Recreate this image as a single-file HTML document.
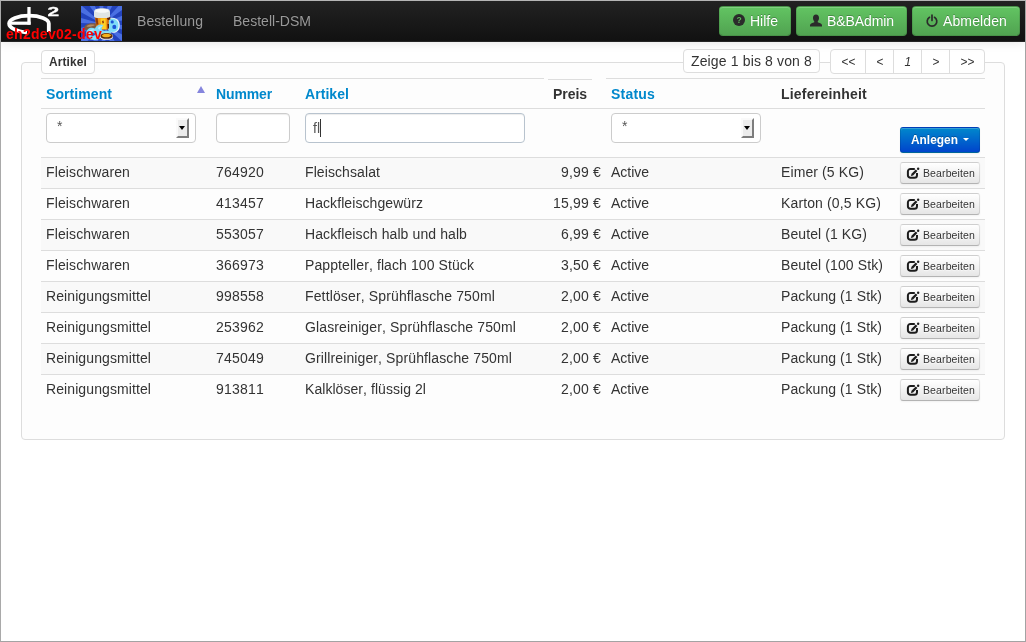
<!DOCTYPE html>
<html lang="de"><head>
<meta charset="utf-8">
<title>Artikel</title>
<style>
*{box-sizing:content-box;}
html,body{margin:0;padding:0;}
html{background:#fff;}
body{width:1024px;height:640px;border:1px solid #a3a3a3;border-top-color:#b5b5b5;border-left-color:#a9a9a9;overflow:hidden;position:relative;
 font-family:"Liberation Sans",Arial,sans-serif;font-size:14px;line-height:20px;color:#333;background:#fff;font-kerning:none;will-change:transform;}
a{text-decoration:none;color:#0088cc;}
/* navbar */
.navbar{position:absolute;left:0;top:0;width:1024px;height:40px;border-bottom:1px solid #252525;
 background:linear-gradient(to bottom,#222222,#111111);box-shadow:0 1px 10px rgba(0,0,0,.1);z-index:5;}
.brand{position:absolute;left:0;top:0;width:130px;height:40px;}
.devname{position:absolute;left:5px;top:23px;font-weight:bold;font-size:14px;line-height:20px;color:#ff0000;white-space:nowrap;}
.nav a{position:absolute;top:0;height:20px;padding:10px 15px;color:#999;text-shadow:0 -1px 0 rgba(0,0,0,.25);white-space:nowrap;}
.btn{display:inline-block;box-sizing:border-box;font-size:14px;line-height:20px;padding:4px 12px;text-align:center;border:1px solid #ccc;border-radius:4px;
 color:#333;text-shadow:0 1px 1px rgba(255,255,255,.75);background:linear-gradient(to bottom,#ffffff,#e6e6e6);
 border-color:rgba(0,0,0,.1) rgba(0,0,0,.1) rgba(0,0,0,.25);border-bottom-color:#b3b3b3;
 box-shadow:inset 0 1px 0 rgba(255,255,255,.2),0 1px 2px rgba(0,0,0,.05);white-space:nowrap;vertical-align:middle;}
.btn-success{color:#fff;text-shadow:0 -1px 0 rgba(0,0,0,.25);background:linear-gradient(to bottom,#62c462,#51a351);
 border-color:rgba(0,0,0,.1) rgba(0,0,0,.1) rgba(0,0,0,.25);}
.btn-primary{color:#fff;text-shadow:0 -1px 0 rgba(0,0,0,.25);background:linear-gradient(to bottom,#0088cc,#0044cc);
 border-color:rgba(0,0,0,.1) rgba(0,0,0,.1) rgba(0,0,0,.25);}
.navbtn{position:absolute;top:5px;height:30px;padding:4px 0;text-align:left;}
.navbtn svg{position:absolute;top:7px;}
.navbtn b{position:absolute;top:4px;font-weight:normal;}
.btn-mini{display:block;position:relative;padding:0;font-size:10.5px;border-radius:3px;height:22px;width:80px;text-align:left;}
.btn-mini svg{position:absolute;left:5px;top:3px;}
.btn-mini b{position:absolute;left:22px;top:0;font-weight:normal;line-height:21px;}
.btn-small{display:block;position:absolute;padding:0;font-size:11.9px;border-radius:3px;height:26px;width:80px;font-weight:bold;text-align:left;}
/* fieldset */
.fs{position:absolute;left:20px;top:61px;width:982px;height:376px;border:1px solid #ddd;border-radius:4px;background:#fdfdfd;}
.legend{position:absolute;left:40px;top:49px;width:52px;height:22px;border:1px solid #ddd;border-radius:4px;background:#fff;
 font-size:11.9px;font-weight:bold;line-height:22px;text-align:center;z-index:2;}
.pinfo{position:absolute;left:682px;top:48px;width:135px;height:22px;border:1px solid #ddd;border-radius:4px;background:#fff;
 font-size:14px;line-height:23px;text-align:center;z-index:2;}
.pager{position:absolute;left:829px;top:48px;height:23px;border:1px solid #ddd;border-radius:4px;background:#fff;z-index:2;display:flex;font-size:11.9px;}
.pager span{display:block;height:23px;line-height:24px;text-align:center;text-indent:1px;border-left:1px solid #ddd;}
.pager span:first-child{border-left:0;}
/* table */
table{position:absolute;left:40px;top:77px;width:944px;border-collapse:collapse;border-spacing:0;table-layout:fixed;z-index:1;}
th,td{padding:4px 5px;line-height:20px;text-align:left;vertical-align:top;border-top:1px solid #ddd;white-space:nowrap;overflow:visible;position:relative;}
th{font-weight:bold;vertical-align:bottom;height:21px;border-top:1px solid transparent;}
td{height:22px;}
th a{color:#0088cc;}
tbody tr:nth-child(even) td{background:#f9f9f9;}
tbody tr:nth-child(odd) td{background:#fdfdfd;}
td.r,th.r{text-align:right;}
tr.filter td{height:40px;background:transparent !important;}
.hl{position:absolute;height:1px;background:#ddd;z-index:2;}
.inp{display:block;box-sizing:border-box;height:30px;border:1px solid #ccc;border-radius:4px;background:#fff;
 box-shadow:inset 0 1px 1px rgba(0,0,0,.075);font-size:14px;line-height:20px;padding:4px 6px;color:#555;position:relative;}
.sel{padding-left:10px;padding-top:2px;box-shadow:none;}
.foc{border-color:#b8c3ce;padding-left:7px;}
.foc u{position:absolute;left:14px;top:5px;width:1px;height:18px;background:#333;}
.sel i{position:absolute;right:6px;top:4px;width:9px;height:16px;background:#ececec;border:2px solid;border-color:#fafafa #7d7d7d #7d7d7d #fafafa;}
.sel i:after{content:"";position:absolute;left:0.900px;top:6px;border:3.700px solid transparent;border-top:4px solid #000;border-bottom:0;}
.caret{display:inline-block;width:0;height:0;vertical-align:top;border-top:3.500px solid #fff;border-right:3.300px solid transparent;border-left:3.300px solid transparent;margin-top:8px;margin-left:5px;}
.sort{position:absolute;left:156px;top:7px;width:0;height:0;border:4px solid transparent;border-top:0;border-bottom:7px solid #8585dd;}
</style>
</head>
<body>
<div class="navbar">
  <div class="brand">
    <svg width="130" height="41" viewBox="0 0 130 41" style="position:absolute;left:0;top:0">
      <g fill="none" stroke="#fff">
        <path stroke-width="3.300" d="M28 6 V23.600"></path>
        <path stroke-width="3.200" d="M9 22.200 H29.600"></path>
        <path stroke-width="3.800" d="M47.800 31 V22.500 A19.800 7.800 0 0 0 8.100 22.500 C8.100 26.500 15 30.500 26 31.500"></path>
      </g>
      <text x="0" y="15" font-family="Liberation Sans, sans-serif" font-weight="bold" font-size="13.500" fill="#fff" stroke="#fff" stroke-width="0.300" transform="translate(46.600 -0.400) scale(1.550 1)">2</text>
    </svg>
    <svg width="41" height="35" viewBox="0 0 41 35" style="position:absolute;left:80px;top:5px">
      <rect width="41" height="35" fill="#2343bd"></rect>
      <path fill="#4a6fe2" d="M21.5 18.0 L81.4 21.0 L79.3 34.3Z M21.5 18.0 L74.2 46.7 L66.5 57.7Z M21.5 18.0 L56.5 66.7 L44.8 73.3Z M21.5 18.0 L31.9 77.1 L18.5 77.9Z M21.5 18.0 L5.2 75.8 L-7.2 70.7Z M21.5 18.0 L-18.2 63.0 L-27.2 53.0Z M21.5 18.0 L-33.8 41.3 L-37.6 28.4Z M21.5 18.0 L-38.4 15.0 L-36.3 1.7Z M21.5 18.0 L-31.2 -10.7 L-23.5 -21.7Z M21.5 18.0 L-13.5 -30.7 L-1.8 -37.3Z M21.5 18.0 L11.1 -41.1 L24.5 -41.9Z M21.5 18.0 L37.8 -39.8 L50.2 -34.7Z M21.5 18.0 L61.2 -27.0 L70.2 -17.0Z M21.5 18.0 L76.8 -5.3 L80.6 7.6Z"></path>
      <path fill="#7d5a40" d="M3 22 C3.500 18.500 8 17 12 17.200 C16 17.300 18.500 19 18 21.500 C17.500 24 13 25 9 24.800 C5.500 24.600 3 24 3 22Z"></path>
      <path fill="#b38c66" d="M5.500 20.500 C7 18.500 11 18.200 14 19 C12 20.300 8 21.300 5.500 20.500Z"></path>
      <path fill="#5b3a26" d="M9 22.500 C11 22 14 22 16 23.500 C13 24.300 11 24.200 9 22.500Z"></path>
      <path fill="#e9f6fb" d="M27.500 13 C30 10.800 36 11.500 38 15.500 C39.800 19.500 38.500 24.500 35 26.300 C32 27.500 28.500 26.500 27.500 24Z"></path>
      <path fill="#7fdcf8" d="M27 13.500 C29.500 11.800 35 12.500 36.800 16 C38.300 19.500 37.300 24 34.300 25.500 C31.500 26.500 28 25.500 27 23.500Z"></path>
      <ellipse cx="31.200" cy="15.900" rx="1.600" ry="1.700" fill="#1d55d6"></ellipse>
      <ellipse cx="33.300" cy="20.900" rx="2" ry="2.200" fill="#1d55d6"></ellipse>
      <path fill="#d4700f" d="M14 11 H28.300 L27.300 23.500 H15.300Z"></path>
      <path fill="#f29a16" d="M17 11.500 H26 L26 23.500 H18Z"></path>
      <path fill="#ffd024" d="M19.500 12.500 H24.500 L25 23 H20.500Z"></path>
      <path fill="#8c3c0c" d="M14.500 12 L16.500 12.300 L17.300 18 L15.500 19Z M21 15 L22.500 14.500 L23 17 L21.500 17.500Z"></path>
      <path fill="#5a1f08" d="M26 10.800 L29.300 10.800 L29.300 13.600 L27 14 L26 12.500Z M26.500 18 L28 18 L28 22.500 L26.800 22.500Z"></path>
      <path fill="#7fdcf8" d="M5.200 27 C5.500 22.500 10 20.500 14 22.500 C15.500 19 20 17.500 22.500 19.500 C20.500 21 20 23 21.500 24.500 C24 25.500 28 24 30 25 C31 27 29 28.500 26 28 C23 28.500 20.500 30 19.500 32 C17 34.500 10 34.800 7 32 C5.500 30.500 5 29 5.200 27Z"></path>
      <path fill="#c9f2fd" d="M7 26.500 C8 23.800 11 23 13.500 24 C11 24.500 9 26 8.500 28.500Z M17 22 C18 20.500 20 19.800 21.500 20.300 C19.500 21 18.500 22.500 18.500 24Z"></path>
      <path fill="#2750c8" d="M9.500 28.500 C10.500 26.500 13 26.300 14.300 28 C13.500 30.300 10.800 30.600 9.500 28.500Z"></path>
      <path fill="#f4f4ee" d="M19 30.500 C19 28 22 26.800 25.500 26.800 C29 26.800 32 28 32 30.500 C32 33 29 33.800 25.500 33.800 C22 33.800 19 33 19 30.500Z"></path>
      <path fill="#5a2a0a" d="M19.500 30 C19.500 28 22 27 25.500 27 C29 27 31.600 28 31.600 30 C31.600 32 29 32.800 25.500 32.800 C22 32.800 19.500 32 19.500 30Z"></path>
      <path fill="#f2b21e" d="M20.800 29.800 C21.500 28.300 23.500 27.800 25.500 27.800 C27.500 27.800 29.500 28.300 30.300 29.500 C29 30.800 27 31.300 25.500 31.300 C23.500 31.300 21.500 30.800 20.800 29.800Z"></path>
      <path fill="#dfe5e5" d="M13 6 C13 3.300 16 2.300 21 2.300 C26 2.300 29 3.300 29 6 V10.200 C29 11.700 26 12 21 12 C16 12 13 11.700 13 10.200Z"></path>
      <path fill="#f7f9f9" d="M14 5.600 C14 3.600 17 3 21 3 C25 3 28 3.600 28 5.600 C26 6.600 24 6.800 21 6.800 C18 6.800 16 6.600 14 5.600Z"></path>
    </svg>
    <div class="devname" style="letter-spacing: 0.283px;">eh2dev02-dev</div>
  </div>
  <div class="nav">
    <a style="left: 121px; letter-spacing: 0.061px;">Bestellung</a>
    <a style="left: 217px; letter-spacing: 0.018px;">Bestell-DSM</a>
  </div>
  <span class="btn btn-success navbtn" style="left:718px;width:72px">
    <svg width="14" height="14" viewBox="0 0 14 14" style="left:12px;top:6px"><circle cx="7" cy="7" r="6" fill="#2b2b2b"></circle><text x="7" y="10" text-anchor="middle" font-family="Liberation Sans, sans-serif" font-weight="bold" font-size="8.5" fill="#5cb85c">?</text></svg>
    <b style="left: 30px; letter-spacing: -0.003px;">Hilfe</b></span>
  <span class="btn btn-success navbtn" style="left:795px;width:111px">
    <svg width="14" height="14" viewBox="0 0 14 14" style="left:12px"><path fill="#2b2b2b" d="M7 0.6c1.9 0 3 1.4 3 3.3 0 1.5-.6 2.8-1.3 3.5v.9c1.600.5 4 1.500 4.300 2.700v1.500H1v-1.500c.3-1.200 2.700-2.200 4.300-2.700v-.9C4.600 6.700 4 5.400 4 3.900 4 2 5.100.6 7 .6z"></path></svg>
    <b style="left: 30px; letter-spacing: -0.088px;">B&amp;BAdmin</b></span>
  <span class="btn btn-success navbtn" style="left:911px;width:108px">
    <svg width="14" height="14" viewBox="0 0 14 14" style="left:12px;top:6.500px"><path fill="none" stroke="#2b2b2b" stroke-width="1.700" stroke-linecap="round" d="M4.500 3.300A4.800 4.800 0 1 0 9.500 3.300M7 1V6.500"></path></svg>
    <b style="left: 30px; letter-spacing: 0.119px;">Abmelden</b></span>
</div>
<div class="fs"></div>
<div class="legend" style="letter-spacing: 0.141px;">Artikel</div>
<div class="pinfo" style="letter-spacing: 0.142px;">Zeige 1 bis 8 von 8</div>
<div class="pager"><span style="width: 34px; letter-spacing: 0.055px;">&lt;&lt;</span><span style="width: 27px; letter-spacing: 0.047px;">&lt;</span><span style="width:27px"><i style="letter-spacing: 0.375px;">1</i></span><span style="width: 27px; letter-spacing: 0.047px;">&gt;</span><span style="width: 34px; letter-spacing: 0.055px;">&gt;&gt;</span></div>
<div class="hl" style="left:40px;top:77px;width:503px"></div>
<div class="hl" style="left:547px;top:78px;width:44px"></div>
<div class="hl" style="left:605px;top:77px;width:379px"></div>
<table>
<colgroup><col style="width:170px"><col style="width:89px"><col style="width:248px"><col style="width:58px"><col style="width:170px"><col style="width:119px"><col style="width:90px"></colgroup>
<thead>
<tr><th><a style="letter-spacing: 0.073px;">Sortiment</a><i class="sort"></i></th><th><a style="letter-spacing: -0.133px;">Nummer</a></th><th><a style="letter-spacing: 0.06px;">Artikel</a></th><th style="letter-spacing: -0.05px;">Preis</th><th><a style="letter-spacing: 0.201px;">Status</a></th><th style="letter-spacing: 0.212px;">Liefereinheit</th><th></th></tr>
</thead>
<tbody>
<tr class="filter"><td><div class="inp sel" style="width:150px"><span style="letter-spacing: -0.453px;">*</span><i></i></div></td><td><div class="inp" style="width:74px"></div></td><td><div class="inp foc" style="width:220px"><span style="letter-spacing: 0px;">fl</span><u></u></div></td><td></td><td><div class="inp sel" style="width:150px"><span style="letter-spacing: -0.453px;">*</span><i></i></div></td><td></td><td><span class="btn btn-primary btn-small" style="left:5px;top:18px"><span style="position:absolute;left:10px;top:2px"><span style="letter-spacing: 0.011px;">Anlegen</span><span class="caret"></span></span></span></td></tr>
<tr><td style="letter-spacing: 0.126px;">Fleischwaren</td><td style="letter-spacing: 0.214px;">764920</td><td style="letter-spacing: 0.09px;">Fleischsalat</td><td class="r" style="letter-spacing: 0.177px;">9,99 €</td><td style="letter-spacing: -0.021px;">Active</td><td style="letter-spacing: 0.109px;">Eimer (5 KG)</td><td><span class="btn btn-mini"><svg width="14" height="14" viewBox="0 0 14 14"><path fill="none" stroke="#1c1c1c" stroke-width="2" stroke-linecap="butt" d="M8.800 2.900H4.500A2.600 2.600 0 0 0 1.900 5.500V9.200A2.600 2.600 0 0 0 4.500 11.800H8.400A2.600 2.600 0 0 0 11 9.200V7"></path><path fill="#1c1c1c" d="M4.900 10 5.500 7.800 9.800 3.500 11.400 5.100 7.100 9.400z"></path><circle cx="12.150" cy="2.750" r="1.200" fill="#1c1c1c"></circle></svg><b style="letter-spacing: 0.12px;">Bearbeiten</b></span></td></tr>
<tr><td style="letter-spacing: 0.126px;">Fleischwaren</td><td style="letter-spacing: 0.214px;">413457</td><td style="letter-spacing: 0.075px;">Hackfleischgewürz</td><td class="r" style="letter-spacing: 0.183px;">15,99 €</td><td style="letter-spacing: -0.021px;">Active</td><td style="letter-spacing: 0.13px;">Karton (0,5 KG)</td><td><span class="btn btn-mini"><svg width="14" height="14" viewBox="0 0 14 14"><path fill="none" stroke="#1c1c1c" stroke-width="2" stroke-linecap="butt" d="M8.800 2.900H4.500A2.600 2.600 0 0 0 1.900 5.500V9.200A2.600 2.600 0 0 0 4.500 11.800H8.400A2.600 2.600 0 0 0 11 9.200V7"></path><path fill="#1c1c1c" d="M4.900 10 5.500 7.800 9.800 3.500 11.400 5.100 7.100 9.400z"></path><circle cx="12.150" cy="2.750" r="1.200" fill="#1c1c1c"></circle></svg><b style="letter-spacing: 0.12px;">Bearbeiten</b></span></td></tr>
<tr><td style="letter-spacing: 0.126px;">Fleischwaren</td><td style="letter-spacing: 0.214px;">553057</td><td style="letter-spacing: 0.098px;">Hackfleisch halb und halb</td><td class="r" style="letter-spacing: 0.177px;">6,99 €</td><td style="letter-spacing: -0.021px;">Active</td><td style="letter-spacing: 0.09px;">Beutel (1 KG)</td><td><span class="btn btn-mini"><svg width="14" height="14" viewBox="0 0 14 14"><path fill="none" stroke="#1c1c1c" stroke-width="2" stroke-linecap="butt" d="M8.800 2.900H4.500A2.600 2.600 0 0 0 1.900 5.500V9.200A2.600 2.600 0 0 0 4.500 11.800H8.400A2.600 2.600 0 0 0 11 9.200V7"></path><path fill="#1c1c1c" d="M4.900 10 5.500 7.800 9.800 3.500 11.400 5.100 7.100 9.400z"></path><circle cx="12.150" cy="2.750" r="1.200" fill="#1c1c1c"></circle></svg><b style="letter-spacing: 0.12px;">Bearbeiten</b></span></td></tr>
<tr><td style="letter-spacing: 0.126px;">Fleischwaren</td><td style="letter-spacing: 0.214px;">366973</td><td style="letter-spacing: 0.091px;">Pappteller, flach 100 Stück</td><td class="r" style="letter-spacing: 0.177px;">3,50 €</td><td style="letter-spacing: -0.021px;">Active</td><td style="letter-spacing: 0.101px;">Beutel (100 Stk)</td><td><span class="btn btn-mini"><svg width="14" height="14" viewBox="0 0 14 14"><path fill="none" stroke="#1c1c1c" stroke-width="2" stroke-linecap="butt" d="M8.800 2.900H4.500A2.600 2.600 0 0 0 1.900 5.500V9.200A2.600 2.600 0 0 0 4.500 11.800H8.400A2.600 2.600 0 0 0 11 9.200V7"></path><path fill="#1c1c1c" d="M4.900 10 5.500 7.800 9.800 3.500 11.400 5.100 7.100 9.400z"></path><circle cx="12.150" cy="2.750" r="1.200" fill="#1c1c1c"></circle></svg><b style="letter-spacing: 0.12px;">Bearbeiten</b></span></td></tr>
<tr><td style="letter-spacing: 0.094px;">Reinigungsmittel</td><td style="letter-spacing: 0.214px;">998558</td><td style="letter-spacing: 0.138px;">Fettlöser, Sprühflasche 750ml</td><td class="r" style="letter-spacing: 0.177px;">2,00 €</td><td style="letter-spacing: -0.021px;">Active</td><td style="letter-spacing: 0.093px;">Packung (1 Stk)</td><td><span class="btn btn-mini"><svg width="14" height="14" viewBox="0 0 14 14"><path fill="none" stroke="#1c1c1c" stroke-width="2" stroke-linecap="butt" d="M8.800 2.900H4.500A2.600 2.600 0 0 0 1.900 5.500V9.200A2.600 2.600 0 0 0 4.500 11.800H8.400A2.600 2.600 0 0 0 11 9.200V7"></path><path fill="#1c1c1c" d="M4.900 10 5.500 7.800 9.800 3.500 11.400 5.100 7.100 9.400z"></path><circle cx="12.150" cy="2.750" r="1.200" fill="#1c1c1c"></circle></svg><b style="letter-spacing: 0.12px;">Bearbeiten</b></span></td></tr>
<tr><td style="letter-spacing: 0.094px;">Reinigungsmittel</td><td style="letter-spacing: 0.214px;">253962</td><td style="letter-spacing: 0.125px;">Glasreiniger, Sprühflasche 750ml</td><td class="r" style="letter-spacing: 0.177px;">2,00 €</td><td style="letter-spacing: -0.021px;">Active</td><td style="letter-spacing: 0.093px;">Packung (1 Stk)</td><td><span class="btn btn-mini"><svg width="14" height="14" viewBox="0 0 14 14"><path fill="none" stroke="#1c1c1c" stroke-width="2" stroke-linecap="butt" d="M8.800 2.900H4.500A2.600 2.600 0 0 0 1.900 5.500V9.200A2.600 2.600 0 0 0 4.500 11.800H8.400A2.600 2.600 0 0 0 11 9.200V7"></path><path fill="#1c1c1c" d="M4.900 10 5.500 7.800 9.800 3.500 11.400 5.100 7.100 9.400z"></path><circle cx="12.150" cy="2.750" r="1.200" fill="#1c1c1c"></circle></svg><b style="letter-spacing: 0.12px;">Bearbeiten</b></span></td></tr>
<tr><td style="letter-spacing: 0.094px;">Reinigungsmittel</td><td style="letter-spacing: 0.214px;">745049</td><td style="letter-spacing: 0.118px;">Grillreiniger, Sprühflasche 750ml</td><td class="r" style="letter-spacing: 0.177px;">2,00 €</td><td style="letter-spacing: -0.021px;">Active</td><td style="letter-spacing: 0.093px;">Packung (1 Stk)</td><td><span class="btn btn-mini"><svg width="14" height="14" viewBox="0 0 14 14"><path fill="none" stroke="#1c1c1c" stroke-width="2" stroke-linecap="butt" d="M8.800 2.900H4.500A2.600 2.600 0 0 0 1.900 5.500V9.200A2.600 2.600 0 0 0 4.500 11.800H8.400A2.600 2.600 0 0 0 11 9.200V7"></path><path fill="#1c1c1c" d="M4.900 10 5.500 7.800 9.800 3.500 11.400 5.100 7.100 9.400z"></path><circle cx="12.150" cy="2.750" r="1.200" fill="#1c1c1c"></circle></svg><b style="letter-spacing: 0.12px;">Bearbeiten</b></span></td></tr>
<tr><td style="letter-spacing: 0.094px;">Reinigungsmittel</td><td style="letter-spacing: 0.211px;">913811</td><td style="letter-spacing: 0.056px;">Kalklöser, flüssig 2l</td><td class="r" style="letter-spacing: 0.177px;">2,00 €</td><td style="letter-spacing: -0.021px;">Active</td><td style="letter-spacing: 0.093px;">Packung (1 Stk)</td><td><span class="btn btn-mini"><svg width="14" height="14" viewBox="0 0 14 14"><path fill="none" stroke="#1c1c1c" stroke-width="2" stroke-linecap="butt" d="M8.800 2.900H4.500A2.600 2.600 0 0 0 1.900 5.500V9.200A2.600 2.600 0 0 0 4.500 11.800H8.400A2.600 2.600 0 0 0 11 9.200V7"></path><path fill="#1c1c1c" d="M4.900 10 5.500 7.800 9.800 3.500 11.400 5.100 7.100 9.400z"></path><circle cx="12.150" cy="2.750" r="1.200" fill="#1c1c1c"></circle></svg><b style="letter-spacing: 0.12px;">Bearbeiten</b></span></td></tr>
</tbody>
</table>


</body></html>
